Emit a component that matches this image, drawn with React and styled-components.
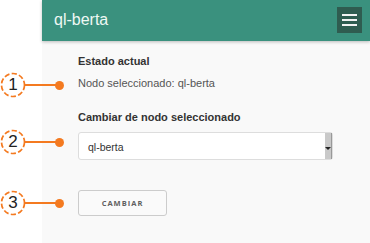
import styled, { createGlobalStyle } from 'styled-components'

const GlobalStyle = createGlobalStyle`
    html, body {
        margin: 0;
        padding: 0;
        background: #fff;
    }
    body {
        font-family: "Liberation Sans", Arial, sans-serif;
    }
`

const callouts = [
    { n: 1, y: 85 },
    { n: 2, y: 142 },
    { n: 3, y: 203 },
]

export default function App(){
    return(
        <Page>
            <GlobalStyle />
            <Gutter />
            <Panel>
                <Header>
                    <Title>ql-berta</Title>
                    <MenuButton aria-label="menu">
                        <Bar /><Bar /><Bar />
                    </MenuButton>
                </Header>
                <Content>
                    <Section>
                        <Label>Estado actual</Label>
                        <Status>Nodo seleccionado: ql-berta</Status>
                    </Section>
                    <Section>
                        <Label>Cambiar de nodo seleccionado</Label>
                        <Select>
                            <span>ql-berta</span>
                            <Spinner><Arrow /></Spinner>
                        </Select>
                    </Section>
                    <Button>CAMBIAR</Button>
                </Content>
            </Panel>
            {callouts.map(c => (
                <Callout key={c.n} style={{ top: c.y - 13 }}>
                    <Circle>
                        <svg width="26" height="26" viewBox="0 0 26 26">
                            <circle cx="13" cy="13" r="11.5" fill="#fff" stroke="#f47a20"
                                strokeWidth="1.7" strokeDasharray="5.2 2.3" />
                        </svg>
                        <Num>{c.n}</Num>
                    </Circle>
                    <Line />
                    <Dot />
                </Callout>
            ))}
        </Page>
    )
}

const Page = styled.div`
    position: relative;
    display: flex;
    width: 370px;
    height: 243px;
    overflow: hidden;
`

const Gutter = styled.div`
    width: 42px;
    flex-shrink: 0;
    background: #fff;
`

const Panel = styled.div`
    flex: 1;
    display: flex;
    flex-direction: column;
    background: #f9f9f9;
`

const Header = styled.div`
    height: 41px;
    display: flex;
    align-items: center;
    justify-content: space-between;
    padding: 0 8px 0 12px;
    background: #3a917e;
    box-shadow: 0 1px 3px rgba(0,0,0,0.25);
`

const Title = styled.div`
    color: #eef8f4;
    font-size: 16px;
    margin-top: -2px;
`

const MenuButton = styled.div`
    width: 25px;
    height: 26px;
    background: #2f5c50;
    display: flex;
    flex-direction: column;
    align-items: center;
    justify-content: center;
    gap: 3px;
    margin-top: -1px;
`

const Bar = styled.div`
    width: 15px;
    height: 2px;
    background: #f2f2f2;
`

const Content = styled.div`
    padding: 14px 0 0 36px;
    display: flex;
    flex-direction: column;
`

const Section = styled.div`
    display: flex;
    flex-direction: column;
    margin-bottom: 22px;
`

const Label = styled.div`
    font-size: 11px;
    font-weight: bold;
    color: #333;
    margin-bottom: 9px;
`

const Status = styled.div`
    font-size: 11px;
    color: #555;
    margin-top: 1px;
`

const Select = styled.div`
    width: 255px;
    height: 28px;
    box-sizing: border-box;
    background: #fff;
    border: 1px solid #ddd;
    border-radius: 3px;
    display: flex;
    align-items: center;
    justify-content: space-between;
    font-size: 10.5px;
    color: #333;
    padding-left: 9px;
    span { margin-top: 1px; }
`

const Spinner = styled.div`
    width: 6px;
    height: 100%;
    background: #c9c9c9;
    border-right: 1px solid #999;
    display: flex;
    align-items: center;
    justify-content: center;
`

const Arrow = styled.div`
    width: 0;
    height: 0;
    border-left: 3px solid transparent;
    border-right: 3px solid transparent;
    border-top: 3px solid #222;
    margin-top: 4px;
`

const Button = styled.div`
    width: 89px;
    height: 26px;
    box-sizing: border-box;
    margin-top: 8px;
    border: 1px solid #ccc;
    border-radius: 3px;
    background: #fafafa;
    display: flex;
    align-items: center;
    justify-content: center;
    font-family: "Open Sans", sans-serif;
    font-size: 7.5px;
    font-weight: bold;
    letter-spacing: 1px;
    color: #5f5f5f;
`

const Callout = styled.div`
    position: absolute;
    left: 0;
    display: flex;
    align-items: center;
    height: 26px;
`

const Circle = styled.div`
    position: relative;
    width: 26px;
    height: 26px;
    svg { position: absolute; inset: 0; }
`

const Num = styled.div`
    position: relative;
    width: 100%;
    height: 100%;
    display: flex;
    align-items: center;
    justify-content: center;
    font-size: 17px;
    color: #222;
`

const Line = styled.div`
    width: 34px;
    height: 2px;
    background: #f47a20;
    margin-left: -2px;
`

const Dot = styled.div`
    width: 9px;
    height: 9px;
    border-radius: 50%;
    background: #f47a20;
    margin-left: -3px;
`
